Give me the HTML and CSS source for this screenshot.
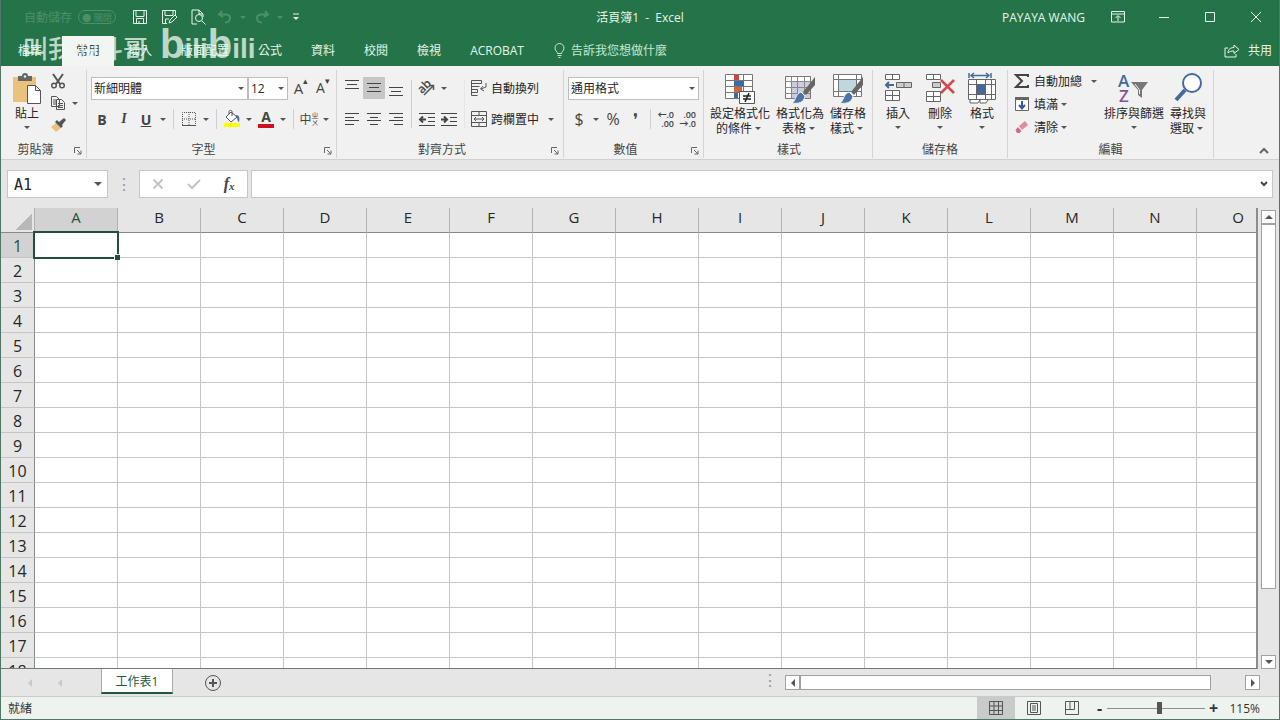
FILE: index.html
```html
<!DOCTYPE html>
<html lang="zh-Hant">
<head>
    <meta charset="UTF-8">
    <meta name="viewport" content="width=device-width, initial-scale=1.0">
    <title>活頁簿1 - Excel</title>
    <link rel="stylesheet" href="styles.css">
</head>
<body>
    <header class="top">
        <div class="titlebar">
            <div class="quick">
                <span class="autosave">自動儲存</span>
                <button class="pill">● 關閉</button>
                <button class="qbtn save" aria-label="儲存"><svg width="16" height="16" viewBox="0 0 16 16"><path d="M1.5 1.5h13v13h-13zM4 1.5v6h8v-6M4.500 14v-4.500h7V14M7 12v2" /></svg></button>
                <button class="qbtn" aria-label="另存新檔"><svg width="16" height="16" viewBox="0 0 16 16"><path d="M14.500 6V1.500h-13v13H6M4 1.500v5h8v-5M4.500 14v-4H8M8 14l1-3 5-5 2 2-5 5z" /></svg></button>
                <button class="qbtn" aria-label="預覽列印"><svg width="16" height="16" viewBox="0 0 16 16"><path d="M7 15H2V1h7l4 4v3M9 1v4h4M12 12l3.500 3.500" /><circle cx="9" cy="9" r="3.500" /></svg></button>
                <button class="qbtn faint" aria-label="復原"><svg width="16" height="16" viewBox="0 0 16 16"><path d="M5 2L2 5.500 6 8M2 5.500h7c6 0 5 8-1 8" stroke-width="2" /></svg></button>
                <i class="caret faint"></i>
                <button class="qbtn faint" aria-label="重做"><svg width="16" height="16" viewBox="0 0 16 16"><path d="M11 2l3 3.500L10 8M14 5.500H7c-6 0-5 8 1 8" stroke-width="2" /></svg></button>
                <i class="caret faint"></i>
                <button class="qbtn more" aria-label="自訂快速存取工具列"><svg width="8" height="8" viewBox="0 0 8 8"><path d="M1 1h6" /><path class="solid" d="M1 4h6L4 7z" /></svg></button>
            </div>
            <div class="doc-title">活頁簿1&nbsp; -&nbsp; Excel</div>
            <div class="window-buttons">
                <span class="user">PAYAYA WANG</span>
                <button aria-label="功能區顯示選項"><svg width="14" height="12" viewBox="0 0 14 12"><path d="M.5.5h13v10.500H.5zM.5 3h13M7 10V5M4.500 7L7 4.500 9.500 7" /></svg></button>
                <button aria-label="最小化"><svg width="12" height="12" viewBox="0 0 12 12"><path d="M1 6.500h10" /></svg></button>
                <button aria-label="最大化"><svg width="12" height="12" viewBox="0 0 12 12"><path d="M1.500 1.500h9v9h-9z" /></svg></button>
                <button aria-label="關閉"><svg width="12" height="12" viewBox="0 0 12 12"><path d="M1 1l10 10M11 1L1 11" /></svg></button>
            </div>
        </div>
        <nav class="tabs">
            <button class="tab file">檔案</button>
            <button class="tab active">常用</button>
            <button class="tab">插入</button>
            <button class="tab">版面配置</button>
            <button class="tab">公式</button>
            <button class="tab">資料</button>
            <button class="tab">校閱</button>
            <button class="tab">檢視</button>
            <button class="tab">ACROBAT</button>
            <button class="tell-me"><svg width="11" height="15" viewBox="0 0 11 15"><path d="M3.500 10.500c0-2-2.500-2.500-2.500-5.500a4.500 4.500 0 0 1 9 0c0 3-2.500 3.500-2.500 5.500zM3.500 12.500h4M4.500 14.500h2" /></svg>告訴我您想做什麼</button>
            <button class="share"><svg width="16" height="15" viewBox="0 0 16 15"><path d="M4 5H1v9h11v-3M4 10c0-4 3-5.500 6-5.500V2l5 4.500-5 4V8C7 8 5.500 8.500 4 10z" /></svg>共用</button>
        </nav>
        <div class="watermark"><span class="wm-name">叫我冲斗哥</span><span class="wm-logo"><b>b</b>ili<b>b</b>ili</span></div>
    </header>

    <section class="ribbon">
        <div class="group clipboard">
            <div class="group-body">
                <button class="big"><svg width="30" height="32" viewBox="0 0 30 32"><path fill="#eac27d" d="M1 4h23v25H1z" /><path fill="#666" d="M6 3h4a3 3 0 0 1 6 0h4v5H6z" /><circle cx="13" cy="3.500" r="1.200" fill="#f1f1f1" /><path fill="#fff" stroke="#555" d="M15.500 12.500h8l5 5v13h-13zM23.500 12.500v5h5" /></svg>貼上<i class="caret"></i></button>
                <div class="small-col">
                    <button class="tool" aria-label="剪下"><svg width="16" height="16" viewBox="0 0 16 16" fill="none" stroke="#555" stroke-width="1.500"><path d="M3 1l7 10M13 1L6 11" stroke-width="2" /><circle cx="4" cy="12.500" r="2.300" /><circle cx="12" cy="12.500" r="2.300" /></svg></button>
                    <div class="row"><button class="tool" aria-label="複製"><svg width="16" height="16" viewBox="0 0 16 16" fill="#f1f1f1" stroke="#555"><path d="M1.500 1.500h5l3 3v7h-8zM6.500 4.500h5l3 3v7h-8z" /><path d="M3 5h3M3 7h3M3 9h3M8 8.500h5M8 10.500h5M8 12.500h5" /></svg></button><i class="caret"></i></div>
                    <button class="tool" aria-label="複製格式"><svg width="16" height="16" viewBox="0 0 16 16"><path fill="#eac27d" d="M1 10l5-4 5 5-5 4-2-2z" /><path fill="#555" d="M5 5l2-2 6 6-2 2zM9 5l5-4 2 2-4 5z" /></svg></button>
                </div>
            </div>
            <div class="group-foot"><span>剪貼簿</span><button class="launcher" aria-label="剪貼簿設定"><svg width="8" height="8" viewBox="0 0 8 8"><path d="M.5 6V.5H6M3 3l4 4M7 3.500V7H3.500" /></svg></button></div>
        </div>

        <div class="group font">
            <div class="group-body rows">
                <div class="row">
                    <label class="combo font-name"><select aria-label="字型名稱"><option>新細明體</option></select><i class="caret"></i></label>
                    <label class="combo font-size"><select aria-label="字型大小"><option>12</option></select><i class="caret"></i></label>
                    <button class="tool grow">A<sup>▴</sup></button>
                    <button class="tool shrink">A<sup>▾</sup></button>
                </div>
                <div class="row">
                    <button class="tool bold">B</button>
                    <button class="tool italic">I</button>
                    <button class="tool underline">U</button>
                    <i class="caret"></i><span class="sep"></span>
                    <button class="tool" aria-label="框線"><svg width="14" height="14" viewBox="0 0 14 14" fill="none" stroke="#555"><path stroke-dasharray="1 1" d="M.5 13V.5h13V13M7 0v13M0 7h14" /><path d="M0 13.500h14" /></svg></button>
                    <i class="caret"></i><span class="sep"></span>
                    <button class="tool" aria-label="填滿色彩"><svg width="16" height="18" viewBox="0 0 16 18"><path fill="#ff0" d="M0 13h16v4H0z" /><path fill="#fff" stroke="#555" d="M2 7l5-5 6 5-6 5zM5 4V1.500C5 0 8 0 8 1.500V6" /><path fill="#456a9a" d="M12 5c3 0 4 3 3 7-2-1-1-4-3-5z" /></svg></button>
                    <i class="caret"></i>
                    <button class="tool font-color" aria-label="字型色彩"><span>A</span></button>
                    <i class="caret"></i><span class="sep"></span>
                    <button class="tool phonetic">中<small>ㄓㄨ</small></button>
                    <i class="caret"></i>
                </div>
            </div>
            <div class="group-foot"><span>字型</span><button class="launcher" aria-label="字型設定"><svg width="8" height="8" viewBox="0 0 8 8"><path d="M.5 6V.5H6M3 3l4 4M7 3.500V7H3.500" /></svg></button></div>
        </div>

        <div class="group align">
            <div class="group-body">
                <div class="rows">
                    <div class="row">
                        <button class="tool" aria-label="靠上對齊"><svg class="lines" width="14" height="16" viewBox="0 0 14 16"><path d="M0 .5h14M2 4.500h10M0 8.500h14" /></svg></button>
                        <button class="tool pressed" aria-label="置中對齊"><svg class="lines" width="14" height="16" viewBox="0 0 14 16"><path d="M0 3.500h14M2 7.500h10M0 11.500h14" /></svg></button>
                        <button class="tool" aria-label="靠下對齊"><svg class="lines" width="14" height="16" viewBox="0 0 14 16"><path d="M0 7.500h14M2 11.500h10M0 15.500h14" /></svg></button>
                    </div>
                    <div class="row">
                        <button class="tool" aria-label="靠左對齊"><svg class="lines" width="14" height="12" viewBox="0 0 14 12"><path d="M0 .5h14M0 4.500h9M0 7.500h14M0 11.500h9" /></svg></button>
                        <button class="tool" aria-label="置中"><svg class="lines" width="14" height="12" viewBox="0 0 14 12"><path d="M0 .5h14M3 4.500h8M0 7.500h14M3 11.500h8" /></svg></button>
                        <button class="tool" aria-label="靠右對齊"><svg class="lines" width="14" height="12" viewBox="0 0 14 12"><path d="M0 .5h14M5 4.500h9M0 7.500h14M5 11.500h9" /></svg></button>
                    </div>
                </div>
                <span class="sep tall"></span>
                <div class="rows">
                    <div class="row">
                        <button class="tool orient" aria-label="方向"><svg width="18" height="16" viewBox="0 0 18 16"><text x="0" y="11" transform="rotate(-45 6 8)">ab</text><path fill="none" stroke="#555" stroke-width="1.500" d="M6 15l9-9M11 5.500h4.500V10" /></svg></button>
                        <i class="caret"></i>
                    </div>
                    <div class="row">
                        <button class="tool" aria-label="減少縮排"><svg class="lines" width="16" height="14" viewBox="0 0 16 14"><path d="M0 1.500h16M9 5.500h7M9 9.500h7M0 13.500h16" /><path d="M1 7.500h6M4 4.500l-3 3 3 3" stroke-width="2" /></svg></button>
                        <button class="tool" aria-label="增加縮排"><svg class="lines" width="16" height="14" viewBox="0 0 16 14"><path d="M0 1.500h16M9 5.500h7M9 9.500h7M0 13.500h16" /><path d="M0 7.500h6M3 4.500l3 3-3 3" stroke-width="2" /></svg></button>
                    </div>
                </div>
                <span class="sep tall light"></span>
                <div class="rows merge">
                    <div class="row"><button class="labelled"><svg width="16" height="16" viewBox="0 0 16 16" fill="none" stroke="#555"><path d="M.5 15.500V.5h10v3h-10M.5 6.500h8M.5 9.500h6v3h-6M.5 15.500h6M15 3v4l-5 2M12 6L9.500 9l3.500 2" /></svg>自動換列</button></div>
                    <div class="row"><button class="labelled"><svg width="16" height="16" viewBox="0 0 16 16" fill="none" stroke="#555"><path d="M.5.5h15v15H.5zM.5 4.500h15M.5 11.500h15M8 .5v4M8 11.500v4M3 8h10M5 6L3 8l2 2M11 6l2 2-2 2" /></svg>跨欄置中</button><i class="caret pushed"></i></div>
                </div>
            </div>
            <div class="group-foot"><span>對齊方式</span><button class="launcher" aria-label="對齊設定"><svg width="8" height="8" viewBox="0 0 8 8"><path d="M.5 6V.5H6M3 3l4 4M7 3.500V7H3.500" /></svg></button></div>
        </div>

        <div class="group number">
            <div class="group-body rows">
                <div class="row"><label class="combo number-format"><select aria-label="數值格式"><option>通用格式</option></select><i class="caret"></i></label></div>
                <div class="row">
                    <button class="tool sign">$</button><i class="caret"></i>
                    <button class="tool sign">%</button>
                    <button class="tool sign">❜</button>
                    <span class="sep"></span>
                    <button class="tool decimals">←.0<br>.00</button>
                    <button class="tool decimals">.00<br>→.0</button>
                </div>
            </div>
            <div class="group-foot"><span>數值</span><button class="launcher" aria-label="數值設定"><svg width="8" height="8" viewBox="0 0 8 8"><path d="M.5 6V.5H6M3 3l4 4M7 3.500V7H3.500" /></svg></button></div>
        </div>

        <div class="group styles">
            <div class="group-body">
                <button class="big"><svg width="32" height="32" viewBox="0 0 32 32"><path fill="#fff" stroke="#777" d="M1.500 1.500h27v24h-27zM1.500 7.500h27M1.500 13.500h27M1.500 19.500h27M10.500 1.500v24M19.500 1.500v24" /><path fill="#d2443c" d="M10 2h5v5h-5z" /><path fill="#3a6da5" d="M10 8h10v5H10zM10 20h4v5h-4z" /><path fill="#d2633c" d="M10 14h8v5h-8z" /><path fill="#fff" stroke="#555" d="M15.500 18.500h15v12h-15z" /><path stroke="#222" stroke-width="1.500" d="M19 23h8M19 26h8M25 20l-4 9" /></svg>設定格式化<span>的條件<i class="caret"></i></span></button>
                <button class="big"><svg width="32" height="32" viewBox="0 0 32 32"><path fill="#fff" stroke="#777" d="M1.500 3.500h25v22h-25z" /><path fill="#ccd" d="M8 9h18v16H8z" /><path fill="none" stroke="#888" d="M1.500 8.500h25M1.500 14.500h25M1.500 20.500h25M7.500 3.500v22M13.500 3.500v22M20.500 3.500v22" /><path fill="#666" d="M31 4v8l-9 10-3-3z" /><path fill="#4a74aa" stroke="#f1f1f1" d="M17 19l4 4c-1 7-7 8-13 7 4-2 3-9 9-11z" /></svg>格式化為<span>表格<i class="caret"></i></span></button>
                <button class="big"><svg width="32" height="32" viewBox="0 0 32 32"><path fill="#fff" stroke="#777" d="M1.500 1.500h28v22h-28zM1.500 6.500h28M1.500 18.500h28M6.500 1.500v22M24.500 1.500v22" /><path fill="#bdd8df" d="M7 7h17v11H7z" /><path fill="#666" d="M31 4v8l-9 10-3-3z" /><path fill="#4a74aa" stroke="#f1f1f1" d="M17 19l4 4c-1 7-7 8-13 7 4-2 3-9 9-11z" /></svg>儲存格<span>樣式<i class="caret"></i></span></button>
            </div>
            <div class="group-foot"><span>樣式</span></div>
        </div>

        <div class="group cells">
            <div class="group-body">
                <button class="big"><svg width="28" height="32" viewBox="0 0 28 32"><path fill="#fff" stroke="#666" d="M1.500 1.500h14v5h-14zM8.500 1.500v5M1.500 17.500h14v10h-14zM1.500 22.500h14M8.500 17.500v10" /><path fill="#ccc" stroke="#666" d="M12.500 9.500h15v5h-15zM20 9.500v5" /><path fill="none" stroke="#456a9a" stroke-width="2" d="M2 12h8M5 9l-3 3 3 3" /></svg>插入<i class="caret"></i></button>
                <button class="big"><svg width="30" height="32" viewBox="0 0 30 32"><path fill="#fff" stroke="#666" d="M1.500 1.500h14v5h-14zM8.500 1.500v5M1.500 18.500h14v10h-14zM1.500 23.500h14M8.500 18.500v10" /><path fill="#ccc" stroke="#666" d="M7.500 9.500h8v5h-8z" /><path fill="none" stroke="#d4474c" stroke-width="2.500" d="M16 7l13 13M29 7L16 20" /></svg>刪除<i class="caret"></i></button>
                <button class="big"><svg width="30" height="32" viewBox="0 0 30 32"><path fill="#fff" stroke="#666" d="M1.500 6.500h27v20h-27zM1.500 11.500h27M1.500 21.500h27M9.500 6.500v20M18.500 6.500v20M24.500 6.500v20M3 27v3h8l2-3M13 27v3h6l2-3" /><path fill="#456a9a" d="M10 12h8v9h-8z" /><path fill="none" stroke="#456a9a" stroke-width="1.500" d="M2 0v5M24 0v5M4 2.500h18M7 0L4 2.500 7 5M19 0l3 2.500L19 5" /></svg>格式<i class="caret"></i></button>
            </div>
            <div class="group-foot"><span>儲存格</span></div>
        </div>

        <div class="group editing">
            <div class="group-body">
                <div class="small-col wide">
                    <div class="row"><button class="labelled"><svg width="16" height="16" viewBox="0 0 16 16" fill="none" stroke="#444" stroke-width="2"><path d="M14 4V2H2l6 6-6 6h12v-2" /></svg>自動加總</button><i class="caret pushed"></i></div>
                    <div class="row"><button class="labelled"><svg width="16" height="16" viewBox="0 0 16 16"><path fill="#fff" stroke="#666" d="M1.500 1.500h13v13h-13z" /><path fill="#666" d="M1 1h14v3H1z" /><path fill="none" stroke="#345f92" stroke-width="2" d="M8 5v7M5 9l3 3.500L11 9" /></svg>填滿</button><i class="caret"></i></div>
                    <div class="row"><button class="labelled"><svg width="16" height="16" viewBox="0 0 16 16"><path fill="#e08ba0" d="M5 7l6-5 3 4-6 5z" /><path fill="#d36c88" d="M4 8l3.500 4-2 2H3l-1.500-3z" /></svg>清除</button><i class="caret"></i></div>
                </div>
                <button class="big"><svg width="32" height="32" viewBox="0 0 32 32"><text class="letter-a" x="0" y="14">A</text><text class="letter-z" x="1" y="29">Z</text><path fill="#777" d="M13 9h17l-6 8v8l-4-3v-5z" /><path stroke="#eee" d="M17 11l4.500 6v4" fill="none" /></svg>排序與篩選<i class="caret"></i></button>
                <button class="big"><svg width="32" height="32" viewBox="0 0 32 32"><circle cx="20" cy="10" r="9" fill="#fff" stroke="#456a9a" stroke-width="2" /><path stroke="#456a9a" stroke-width="4" d="M13 17L4 27" /></svg>尋找與<span>選取<i class="caret"></i></span></button>
            </div>
            <div class="group-foot"><span>編輯</span></div>
        </div>
        <button class="collapse" aria-label="摺疊功能區"><svg width="10" height="6" viewBox="0 0 10 6"><path d="M1 5l4-4 4 4" /></svg></button>
    </section>

    <div class="formula-bar">
        <label class="name-box"><input type="text" value="A1" aria-label="名稱方塊"><i class="caret"></i></label>
        <span class="dots">⋮</span>
        <div class="formula-buttons">
            <button aria-label="取消"><svg width="12" height="12" viewBox="0 0 12 12"><path d="M1.500 1.500l9 9M10.500 1.500l-9 9" /></svg></button>
            <button aria-label="輸入"><svg width="14" height="12" viewBox="0 0 14 12"><path d="M1 6l4 4 8-8" /></svg></button>
            <button class="fx">f<small>x</small></button>
        </div>
        <div class="formula-input"><input type="text" aria-label="資料編輯列"><svg width="8" height="6" viewBox="0 0 8 6"><path d="M1 1l3 3 3-3" /></svg></div>
    </div>

    <main class="workspace">
        <div class="sheet">
            <table class="grid" id="grid"></table>
        </div>
        <div class="vscroll">
            <button aria-label="向上捲動"><i class="arrow up"></i></button>
            <div class="thumb"></div>
            <button aria-label="向下捲動"><i class="arrow down"></i></button>
        </div>
    </main>

    <div class="sheet-bar">
        <div class="sheet-nav"><i class="arrow left"></i><i class="arrow left"></i></div>
        <button class="sheet-tab">工作表1</button>
        <button class="add-sheet" aria-label="新增工作表"><svg width="16" height="16" viewBox="0 0 16 16"><circle cx="8" cy="8" r="7.500" /><path d="M8 4v8M4 8h8" stroke-width="2" /></svg></button>
        <span class="dots">⋮</span>
        <div class="hscroll">
            <button aria-label="向左捲動"><i class="arrow left"></i></button>
            <div class="thumb"></div>
            <button aria-label="向右捲動"><i class="arrow right"></i></button>
        </div>
    </div>

    <footer class="status">
        <span class="ready">就緒</span>
        <button class="view on" aria-label="標準模式"><svg width="14" height="14" viewBox="0 0 14 14"><path d="M.5.5h13v13H.5zM.5 5h13M.5 9.500h13M5 .5v13M9.500.5v13" /></svg></button>
        <button class="view" aria-label="整頁模式"><svg width="14" height="14" viewBox="0 0 14 14"><path d="M.5.5h13v13H.5zM3.500 2.500h7v9h-7zM5 5h4M5 7h4M5 9h4" /></svg></button>
        <button class="view" aria-label="分頁預覽"><svg width="14" height="14" viewBox="0 0 14 14"><path d="M.5.5h13v13H.5zM5 .5v8M9.500.5v8M.5 8.500h9" /></svg></button>
        <button class="zoom-step">-</button>
        <input class="zoom" type="range" min="0" max="100" value="53" aria-label="顯示比例">
        <button class="zoom-step">+</button>
        <span class="percent">115%</span>
    </footer>
    <script src="script.js"></script>
</body>
</html>
```
FILE: styles.css
```css
* {
    box-sizing: border-box;
}

body {
    margin: 0;
    height: 100vh;
    display: flex;
    flex-direction: column;
    overflow: hidden;
    border: 1px solid #4f7763;
    border-top: none;
    background: #e6e6e6;
    color: #262626;
    font-family: "Open Sans", "Noto Sans CJK TC", sans-serif;
    font-size: 12px;
}

button {
    display: flex;
    align-items: center;
    justify-content: center;
    padding: 0;
    border: none;
    background: none;
    color: inherit;
    font: inherit;
    white-space: nowrap;
}

input, select {
    border: none;
    outline: none;
    background: none;
    color: inherit;
    font: inherit;
    min-width: 0;
}

svg {
    flex: none;
    overflow: visible;
}

/* title bar and tabs */
.top {
    position: relative;
    background: #257449;
    color: #e4f7ea;
}

.top svg {
    fill: none;
    stroke: currentColor;
}

.top svg .solid {
    fill: currentColor;
    stroke: none;
}

.titlebar {
    display: grid;
    grid-template-columns: 1fr auto 1fr;
    align-items: center;
    height: 34px;
}

.quick {
    display: flex;
    align-items: center;
    padding-left: 23px;
}

.autosave {
    color: #4c8f6b;
    margin-right: 6px;
}

.pill {
    width: 38px;
    height: 14px;
    border: 1px solid #4c8f6b;
    border-radius: 7px;
    color: #4c8f6b;
    font-size: 9px;
}

.qbtn {
    width: 29px;
    height: 24px;
}

.qbtn.more {
    width: 20px;
}

.save {
    margin-left: 9px;
}

.qbtn.faint {
    width: 24px;
    margin-left: 1px;
}

.faint {
    color: #4c8f6b;
}

.window-buttons {
    display: flex;
    justify-content: flex-end;
    align-items: center;
}

.window-buttons button {
    width: 46px;
    height: 32px;
}

.user {
    margin-right: 10px;
}

.tabs {
    display: flex;
    height: 32px;
    padding-left: 3px;
}

.tab {
    padding: 0 14px;
    margin-right: 1px;
    height: 28px;
    margin-top: 2px;
}

.tab.file {
    margin-right: 6px;
}

.tab.active {
    height: 30px;
    padding-bottom: 2px;
    margin-right: 0;
    background: #f3f5f3;
    color: #2f4a3b;
}

.tell-me, .share {
    gap: 6px;
    height: 32px;
    color: #c5e8d1;
}

.tell-me {
    margin-left: 15px;
}

.share {
    margin-left: auto;
    margin-right: 7px;
    gap: 8px;
    color: #e4f7ea;
}

.watermark {
    position: absolute;
    left: 22px;
    bottom: 0;
    height: 44px;
    display: flex;
    gap: 12px;
    align-items: center;
    color: rgba(240, 250, 243, 0.75);
    pointer-events: none;
}

.wm-name {
    font-size: 25px;
    font-weight: 500;
    padding-top: 6px;
}

.wm-logo {
    font-family: "Liberation Sans", sans-serif;
    font-size: 28px;
    font-weight: bold;
    line-height: 44px;
    padding-top: 4px;
}

.wm-logo b {
    font-size: 40px;
}

/* ribbon */
.ribbon {
    display: flex;
    height: 94px;
    padding: 4px 0 1px;
    background: #f1f1f1;
    border-bottom: 1px solid #d0d0d0;
}

.group {
    display: flex;
    flex-direction: column;
    flex: none;
    padding-left: 4px;
    border-right: 1px solid #d4d4d4;
}

.group-body {
    display: flex;
    flex: 1;
}

.group-foot {
    display: flex;
    align-items: center;
    height: 18px;
    margin-left: -4px;
    color: #444;
}

.group-foot span {
    flex: 1;
    text-align: center;
}

.clipboard {
    width: 86px;
}

.font {
    width: 250px;
}

.align {
    width: 227px;
}

.number {
    width: 140px;
}

.styles {
    width: 169px;
    padding-left: 6px;
}

.cells {
    width: 135px;
}

.editing {
    width: 206px;
}

.launcher {
    width: 8px;
    height: 8px;
    margin: 3px 4px 0;
}

.launcher svg, .collapse svg {
    fill: none;
    stroke: #666;
}

.rows {
    display: flex;
    flex-direction: column;
    gap: 9px;
    padding-top: 7px;
}

.rows.merge {
    padding-left: 2px;
}

.row {
    display: flex;
    align-items: center;
    height: 22px;
}

.tool {
    width: 22px;
    height: 22px;
    font-size: 14px;
    color: #444;
}

.pressed {
    background: #c6c6c6;
}

.caret {
    flex: none;
    display: inline-flex;
    width: 12px;
    height: 12px;
    align-items: center;
    justify-content: center;
}

.caret::before {
    content: "";
    border: 3px solid transparent;
    border-top-color: #555;
    border-bottom: none;
}

.caret.faint::before {
    border-top-color: #4c8f6b;
}

.pushed {
    margin-left: 6px;
}

.sep {
    width: 1px;
    height: 20px;
    margin: 0 4px;
    background: #d0d0d0;
}

.sep.tall {
    height: 48px;
    margin-top: 10px;
}

.sep.light {
    background: #e6e6e6;
}

.big {
    flex-direction: column;
    justify-content: flex-start;
    padding-top: 3px;
    line-height: 15px;
}

.big svg {
    margin-bottom: 1px;
}

.big span {
    display: flex;
    align-items: center;
}

.clipboard .big {
    width: 36px;
    margin: 0 2px 0 4px;
}

.styles .group-body, .editing .group-body {
    gap: 6px;
}

.cells .big {
    width: 42px;
}

.small-col {
    display: flex;
    flex-direction: column;
}

.small-col .tool, .small-col .row {
    height: 22px;
}

.small-col.wide {
    gap: 1px;
    width: 84px;
    margin-left: 2px;
}

.labelled {
    gap: 4px;
}

.combo {
    display: grid;
    align-items: center;
    height: 23px;
    background: #fff;
    border: 1px solid #bdbdbd;
}

.combo select, .combo .caret {
    grid-area: 1 / 1;
}

.combo select {
    appearance: none;
    padding: 0 2px;
    width: 100%;
}

.combo .caret {
    justify-self: end;
    pointer-events: none;
}

.font-name {
    width: 157px;
}

.font-size {
    width: 40px;
    margin-right: 2px;
}

.number-format {
    width: 131px;
}

.grow {
    font-size: 15px;
}

.grow, .shrink {
    align-items: flex-start;
    line-height: 22px;
}

.tool sup {
    font-size: 9px;
    line-height: 8px;
}

.bold {
    font-weight: bold;
}

.italic {
    font-family: "Liberation Serif", serif;
    font-style: italic;
    font-weight: bold;
}

.underline {
    font-weight: bold;
    text-decoration: underline;
}

.font-color span {
    width: 16px;
    line-height: 14px;
    font-weight: bold;
    border-bottom: 4px solid #d00f1e;
}

.phonetic small {
    width: 7px;
    font-size: 7px;
    line-height: 7px;
    white-space: normal;
}

.phonetic {
    font-size: 12px;
}

.sign {
    font-size: 16px;
}

.decimals {
    display: block;
    font-size: 9px;
    font-weight: 600;
    line-height: 9px;
    text-align: right;
    padding-right: 3px;
}

.lines {
    fill: none;
    stroke: #444;
}

.orient text {
    font-size: 12px;
    font-weight: 600;
    fill: #444;
}

.letter-a, .letter-z {
    font-size: 17px;
    font-weight: 600;
    fill: #456a9a;
}

.letter-z {
    fill: #83569c;
}

.collapse {
    margin: auto 10px 4px auto;
}

.collapse svg {
    stroke-width: 2;
}

/* formula bar */
.formula-bar {
    display: flex;
    align-items: center;
    height: 48px;
    padding: 0 6px;
}

.name-box, .formula-buttons, .formula-input {
    display: flex;
    align-items: center;
    height: 28px;
    background: #fff;
    border: 1px solid #c6c6c6;
}

.name-box {
    width: 101px;
    padding-right: 3px;
}

.name-box input {
    flex: 1;
    padding: 2px 6px 0;
    font: 15px "DejaVu Sans Mono", monospace;
}

.name-box .caret::before {
    border-width: 4px 4px 0;
}

.dots {
    width: 31px;
    text-align: center;
    font-size: 16px;
    color: #999;
}

.formula-buttons {
    width: 109px;
    margin-right: 3px;
}

.formula-buttons button {
    flex: 1;
}

.formula-buttons svg {
    fill: none;
    stroke: #c4c4c4;
    stroke-width: 2;
}

.formula-buttons .fx {
    font: italic bold 16px "Liberation Serif", serif;
    color: #444;
}

.fx small {
    font-size: 11px;
    padding-top: 4px;
}

.formula-input {
    flex: 1;
    padding-right: 4px;
}

.formula-input input {
    flex: 1;
}

.formula-input svg {
    fill: none;
    stroke: #444;
    stroke-width: 2;
}

/* worksheet */
.workspace {
    flex: 1;
    min-height: 0;
    display: flex;
}

.sheet {
    flex: 1;
    min-width: 0;
    overflow: hidden;
    border-right: 2px solid #8a8f8c;
    border-bottom: 1px solid #737a76;
}

.grid {
    width: 1279px;
    table-layout: fixed;
    border-spacing: 0;
    background: #fff;
}

.grid th, .grid td {
    height: 25px;
    padding: 0;
    border-right: 1px solid #c3c6c4;
    border-bottom: 1px solid #c3c6c4;
}

.grid th {
    background: #e6e6e6;
    font-size: 15px;
    font-weight: normal;
    line-height: 18px;
}

.grid thead th {
    border-bottom-color: #858a87;
    border-right-color: #b0b3b1;
    padding-bottom: 6px;
}

.grid tbody th {
    border-right-color: #858a87;
    font-size: 16px;
    padding-top: 2px;
}

.grid thead .corner {
    width: 34px;
    border-right-color: #b0b3b1;
    padding: 4px 2px 2px 14px;
}

.corner::before {
    content: "";
    display: block;
    height: 17px;
    background: linear-gradient(135deg, transparent 50%, #b8b8b8 50%);
}

.grid .current {
    background: #d2d2d2;
    color: #2b5040;
}

.selected {
    position: relative;
}

.selected::before {
    content: "";
    position: absolute;
    inset: -2px;
    border: 2px solid #214f3a;
}

.selected::after {
    content: "";
    position: absolute;
    right: -3px;
    bottom: -3px;
    width: 5px;
    height: 5px;
    background: #214f3a;
    border: 1px solid #fff;
    border-width: 1px 0 0 1px;
}

.arrow {
    border: 4px solid transparent;
}

.arrow.up {
    border-bottom-color: #555;
    border-top: none;
}

.arrow.down {
    border-top-color: #555;
    border-bottom: none;
}

.arrow.left {
    border-right-color: #555;
    border-left: none;
}

.arrow.right {
    border-left-color: #555;
    border-right: none;
}

.vscroll {
    display: flex;
    flex-direction: column;
    width: 21px;
    padding: 2px 3px 0;
}

.vscroll button, .hscroll button, .thumb {
    flex: none;
    background: #fff;
    border: 1px solid #a0a3a1;
}

.vscroll button {
    height: 14px;
}

.vscroll .thumb {
    flex: 0 1 365px;
    margin-bottom: auto;
}

.sheet-bar {
    display: flex;
    height: 27px;
    padding-right: 19px;
}

.sheet-nav {
    display: flex;
    align-items: center;
    gap: 26px;
    width: 100px;
    padding-left: 27px;
    opacity: 0.2;
}

.sheet-tab {
    width: 72px;
    height: 25px;
    background: #fff;
    border: 1px solid #aaa;
    border-top: none;
    border-bottom: 2px solid #20593d;
    color: #20593d;
}

.add-sheet {
    margin: 0 auto 0 32px;
}

.add-sheet svg, .status svg {
    fill: none;
    stroke: #555;
}

.hscroll {
    display: flex;
    align-items: center;
    flex: 0 0 475px;
    min-width: 0;
}

.hscroll button {
    width: 15px;
    height: 15px;
}

.hscroll .thumb {
    flex: 0 1 411px;
    height: 15px;
    margin-right: auto;
}

.status {
    display: flex;
    align-items: center;
    height: 23px;
    padding: 0 19px 0 7px;
    background: #eef3ef;
    border-top: 1px solid #c9ccca;
    color: #333;
}

.ready {
    margin-right: auto;
}

.view {
    width: 38px;
    height: 22px;
}

.view.on {
    background: #c8cbc9;
}

.zoom-step {
    width: 16px;
    font-size: 16px;
    font-weight: bold;
}

.zoom {
    appearance: none;
    width: 98px;
    height: 14px;
    margin: 0;
    background: linear-gradient(#8c8f8d, #8c8f8d) center / 100% 1px no-repeat;
}

.zoom::-webkit-slider-thumb {
    appearance: none;
    width: 5px;
    height: 12px;
    background: #555;
}

.percent {
    margin-left: 8px;
}
```
FILE: script.js
```js
const columns = 'ABCDEFGHIJKLMNO'.split('');
const rowCount = 18;

let html = '<thead><tr><th class="corner"></th>';
columns.forEach(name => {
    html += `<th scope="col"${name === 'A' ? ' class="current"' : ''}>${name}</th>`;
});
html += '</tr></thead><tbody>';

for (let r = 1; r <= rowCount; r++) {
    html += `<tr><th scope="row"${r === 1 ? ' class="current"' : ''}>${r}</th>`;
    columns.forEach(name => {
        html += r === 1 && name === 'A' ? '<td class="selected"></td>' : '<td></td>';
    });
    html += '</tr>';
}

document.getElementById('grid').innerHTML = html + '</tbody>';
```
